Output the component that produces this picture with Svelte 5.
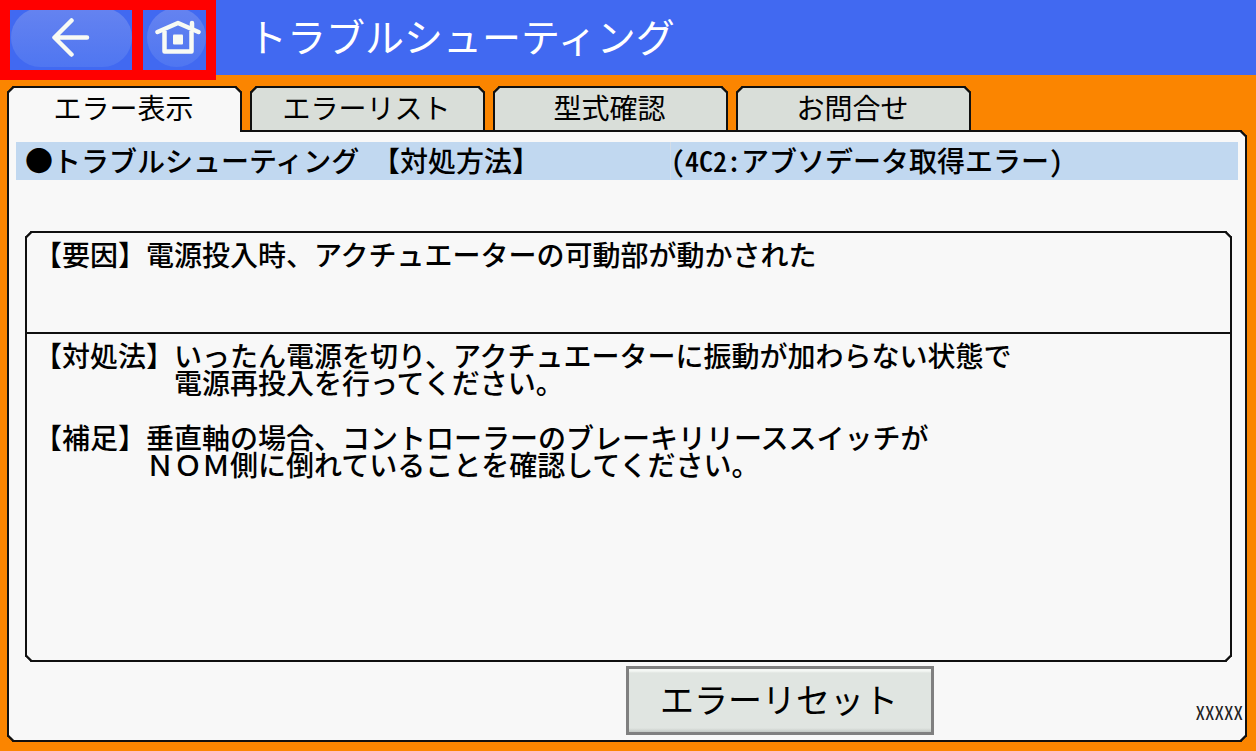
<script>
  const TABS = ['エラー表示', 'エラーリスト', '型式確認', 'お問合せ'];

  let active = $state(0);
</script>

<div class="screen">
  <header class="topbar">
    <nav class="nav">
      <button class="nav-btn back" aria-label="戻る">
        <svg width="40" height="40" viewBox="0 0 40 40" fill="none">
          <path d="M36 19.5H4M20.5 2.5L3.5 19.5L20.5 36.5" stroke="#f8faf4" stroke-width="4.5" stroke-linecap="round" stroke-linejoin="round" />
        </svg>
      </button>
      <button class="nav-btn home" aria-label="ホーム">
        <svg width="46" height="36" viewBox="0 0 46 36" fill="none">
          <path d="M2.5 13L23 4L43.5 13" stroke="#f8faf4" stroke-width="4.5" stroke-linecap="round" stroke-linejoin="round" />
          <path d="M37 4V9" stroke="#f8faf4" stroke-width="4.5" stroke-linecap="round" />
          <path d="M9.5 12V32.5H36.5V12" stroke="#f8faf4" stroke-width="4.5" stroke-linejoin="round" />
          <rect x="18" y="15.5" width="10" height="10" rx="1" fill="#f8faf4" />
        </svg>
      </button>
    </nav>
    <h1>トラブルシューティング</h1>
  </header>

  <main>
    <div class="tabs" role="tablist">
      {#each TABS as tab, i}
        <button class="tab" class:active={active === i} role="tab" aria-selected={active === i} onclick={() => (active = i)}>{tab}</button>
      {/each}
    </div>

    <section class="panel">
      <div class="banner">
        <h2 class="banner-title">●トラブルシューティング&nbsp;&nbsp;【対処方法】</h2>
        <p class="banner-code">(4C2:アブソデータ取得エラー)</p>
      </div>

      <div class="detail">
        <div class="cause">
          <p class="item"><span>【要因】</span><span>電源投入時、アクチュエーターの可動部が動かされた</span></p>
        </div>
        <div class="remedy">
          <p class="item">
            <span>【対処法】</span><span>いったん電源を切り、アクチュエーターに振動が加わらない状態で<br />電源再投入を行ってください。</span>
          </p>
          <p class="item">
            <span>【補足】</span><span>垂直軸の場合、コントローラーのブレーキリリーススイッチが<br />ＮＯＭ側に倒れていることを確認してください。</span>
          </p>
        </div>
      </div>

      <footer class="footer">
        <button class="reset-btn">エラーリセット</button>
        <span class="version">XXXXX</span>
      </footer>
    </section>
  </main>
</div>

<style>
  :global(body) {
    margin: 0;
    background: #fb8500;
  }

  .screen {
    --line: #101010;
    --paper: #f8f8f8;
    min-height: 100vh;
    box-sizing: border-box;
    padding-bottom: 9px;
    display: flex;
    flex-direction: column;
    background: #fb8500;
    color: #000;
    font-family: "Noto Sans CJK JP", sans-serif;
    text-spacing-trim: space-all;
  }

  h1, h2, p {
    margin: 0;
  }

  button {
    font: inherit;
    color: inherit;
    cursor: pointer;
  }

  /* Header */
  .topbar {
    height: 75px;
    display: flex;
    align-items: flex-start;
    gap: 32px;
    background: #4169f1;
  }

  .nav {
    display: flex;
    gap: 11px;
    padding: 10px;
    background: #f00;
  }

  .nav-btn {
    position: relative;
    height: 60px;
    padding: 0;
    border: none;
    display: flex;
    align-items: center;
    justify-content: center;
    background: #4169f1;
    overflow: hidden;
  }

  .back {
    width: 122px;
    padding-bottom: 4px;
  }

  .home {
    width: 63px;
    padding: 0 0 6px 6px;
  }

  /* lighter pill behind each icon */
  .nav-btn::before {
    content: "";
    position: absolute;
    inset: -2px 0 3px 1px;
    border-radius: 30px;
    background: linear-gradient(#6583f0, #4f76f1);
  }

  .home::before {
    left: 4px;
  }

  .nav-btn svg {
    position: relative;
  }

  h1 {
    color: #fff;
    font-size: 39px;
    font-weight: 400;
    line-height: 71px;
    white-space: nowrap;
  }

  /* Tabs */
  main {
    flex: 1;
    display: flex;
    flex-direction: column;
    padding: 11px 9px 0 7px;
  }

  .tabs {
    display: flex;
    gap: 8px;
  }

  .tab {
    width: 235px;
    height: 45px;
    box-sizing: border-box;
    padding: 0 2px 5px 0;
    border: 2px solid var(--line);
    border-bottom: none;
    border-radius: 6px 6px 0 0;
    corner-shape: bevel;
    background: #d9ded9;
    font-size: 28px;
    line-height: 38px;
  }

  .tab.active {
    height: 46px;
    margin-bottom: -1px;
    padding-bottom: 6px;
    background: var(--paper);
    z-index: 1;
  }

  /* Panel */
  .panel {
    flex: 1;
    display: flex;
    flex-direction: column;
    margin-top: -1px;
    padding: 10px 7px 0;
    border: 2px solid var(--line);
    border-radius: 0 6px 6px 6px;
    corner-shape: bevel;
    background: var(--paper);
  }

  .banner {
    display: grid;
    grid-template-columns: 654px 1fr;
    white-space: nowrap;
  }

  .banner-title, .banner-code {
    height: 38px;
    font-size: 28px;
    font-weight: 500;
    line-height: 36px;
    background: #c1d8f0;
  }

  .banner-title {
    padding-left: 9px;
  }

  .banner-code {
    border-left: 1px solid #d3dde8;
  }

  .banner-code, .version {
    font-feature-settings: "hwid" 1;
  }

  .detail {
    flex: 1;
    display: flex;
    flex-direction: column;
    margin: 51px 6px 0 9px;
    border: 2px solid var(--line);
    border-radius: 6px;
    corner-shape: bevel;
    font-size: 28px;
    font-weight: 500;
    line-height: 27px;
  }

  .cause {
    height: 91px;
    padding: 8px 7px 0;
    border-bottom: 2px solid var(--line);
  }

  .remedy {
    flex: 1;
    display: flex;
    flex-direction: column;
    gap: 28px;
    padding: 8px 7px;
  }

  .item {
    display: flex;
  }

  .item span:first-child {
    flex-shrink: 0;
  }

  /* Footer */
  .footer {
    display: grid;
    grid-template-columns: 1fr 1fr;
    padding: 4px 2px 5px 0;
  }

  .reset-btn {
    grid-column: 2;
    grid-row: 1;
    justify-self: start;
    width: 308px;
    height: 69px;
    padding: 0 2px 4px 0;
    border: 3px solid #808080;
    background: linear-gradient(#f4f7f4 0 2px, #e0e5e1 4px 59px, #c4c9c5 63px);
    font-size: 34px;
    line-height: 56px;
  }

  .version {
    grid-column: 2;
    grid-row: 1;
    justify-self: end;
    align-self: end;
    margin-right: -7px;
    padding-bottom: 9px;
    font-size: 19px;
    line-height: 28px;
    color: #222;
  }
</style>
